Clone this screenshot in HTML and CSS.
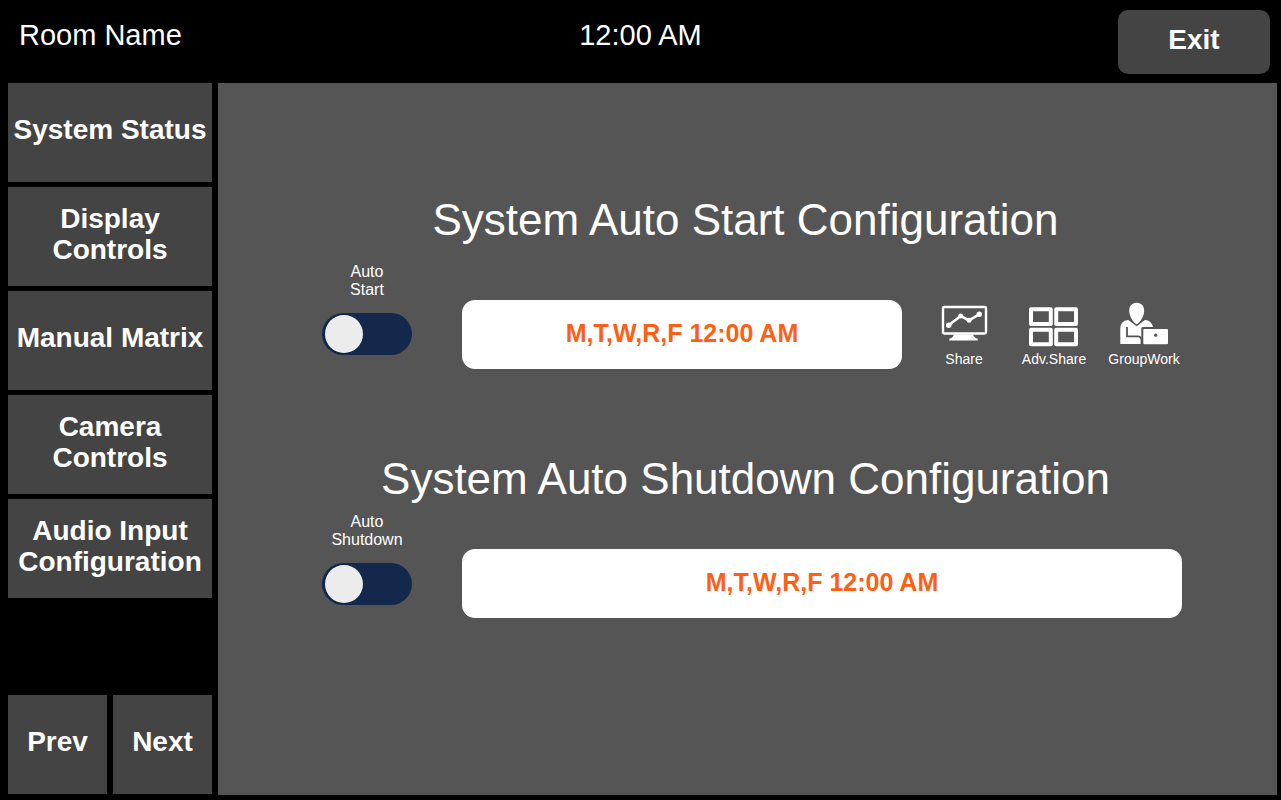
FILE: index.html
```html
<!DOCTYPE html>
<html lang="en">
<head>
<meta charset="utf-8">
<meta name="viewport" content="width=device-width, initial-scale=1">
<title>System Auto Start Configuration</title>
<link rel="stylesheet" href="styles.css">
</head>
<body>
<header class="topbar">
  <div class="room">Room Name</div>
  <time class="clock">12:00 AM</time>
  <button class="btn exit" type="button">Exit</button>
</header>
<div class="layout">
  <nav class="sidebar">
    <button class="btn tile" type="button">System Status</button>
    <button class="btn tile" type="button">Display Controls</button>
    <button class="btn tile" type="button">Manual Matrix</button>
    <button class="btn tile" type="button">Camera Controls</button>
    <button class="btn tile" type="button">Audio Input Configuration</button>
    <div class="pager">
      <button class="btn tile" type="button">Prev</button>
      <button class="btn tile" type="button">Next</button>
    </div>
  </nav>
  <main class="panel">
    <section class="start">
      <h1 class="title">System Auto Start Configuration</h1>
      <div class="row row-start">
        <label class="switch"><span class="switch-text">Auto Start</span><input class="toggle" type="checkbox" role="switch"></label>
        <button class="schedule" type="button">M,T,W,R,F 12:00 AM</button>
        <div class="modes">
          <button class="mode" type="button">
            <svg class="icon" viewBox="0 0 50 50" aria-hidden="true">
              <rect x="4" y="7" width="43" height="26.500" rx="1.200" fill="none" stroke="#fff" stroke-width="2.400"/>
              <path d="M15 34.500h19q1 3.300 4.700 4.300v1.700H10.300v-1.700q3.700-1 4.700-4.300z" fill="#fff"/>
              <path d="M9.700 25.300 21.700 16l8.300 4.300 10.300-6" fill="none" stroke="#fff" stroke-width="2.600"/>
              <g fill="#fff"><circle cx="9.700" cy="25.300" r="2.700"/><circle cx="21.700" cy="16" r="2.500"/><circle cx="30" cy="20.300" r="2.500"/><circle cx="40.300" cy="14.300" r="2.700"/></g>
            </svg>
            <span>Share</span>
          </button>
          <button class="mode" type="button">
            <svg class="icon" viewBox="0 0 50 50" aria-hidden="true">
              <g fill="none" stroke="#fff" stroke-width="4" stroke-linejoin="round">
                <rect x="2" y="9.300" width="19.800" height="14.600"/><rect x="27.200" y="9.300" width="19.800" height="14.600"/>
                <rect x="2" y="29.700" width="19.800" height="14.600"/><rect x="27.200" y="29.700" width="19.800" height="14.600"/>
              </g>
            </svg>
            <span>Adv.Share</span>
          </button>
          <button class="mode" type="button">
            <svg class="icon" viewBox="0 0 50 50" aria-hidden="true">
              <path d="M17.700 2.700c5 0 8 3.600 7.400 9.300-.5 5-4 10.500-7.400 12.300-3.400-1.800-6.900-7.300-7.400-12.300-.6-5.700 2.400-9.300 7.400-9.300z" fill="#fff"/>
              <path d="M9.300 20 17.700 26.300l8.300-6.300q6.500.5 8 6.800V44H1.300V28.500q0-8 8-8.500z" fill="#fff"/>
              <path d="M8 27v9.300h11q3.500.4 3.500 4V45" fill="none" stroke="#555" stroke-width="1.800"/>
              <rect x="22.300" y="27" width="28" height="18.500" rx="1.500" fill="#555"/>
              <rect x="24.300" y="29" width="24.700" height="15.300" rx="1" fill="#fff"/>
              <circle cx="36.700" cy="35.200" r="1.600" fill="#555"/>
            </svg>
            <span>GroupWork</span>
          </button>
        </div>
      </div>
    </section>
    <section class="shutdown">
      <h2 class="title">System Auto Shutdown Configuration</h2>
      <div class="row row-shutdown">
        <label class="switch"><span class="switch-text">Auto Shutdown</span><input class="toggle" type="checkbox" role="switch"></label>
        <button class="schedule" type="button">M,T,W,R,F 12:00 AM</button>
      </div>
    </section>
  </main>
</div>
</body>
</html>
```
FILE: styles.css
```css
* { box-sizing: border-box; }

body {
  margin: 0;
  min-height: 100vh;
  display: flex;
  flex-direction: column;
  background: #000;
  color: #fff;
  font-family: "Liberation Sans", Arial, sans-serif;
}

button {
  margin: 0;
  border: 0;
  font-family: inherit;
  color: inherit;
  cursor: pointer;
}

.topbar {
  display: grid;
  grid-template-columns: 1fr auto 1fr;
  align-items: start;
  padding: 10px 11px 9px;
  font-size: 29px;
  line-height: 32px;
}

.room,
.clock { padding-top: 9px; }

.room { padding-left: 8px; }

.btn {
  padding: 0 0 6px;
  background: #444;
  font-size: 28px;
  font-weight: bold;
  line-height: 31px;
}

.exit {
  justify-self: end;
  width: 152px;
  height: 64px;
  border-radius: 10px;
}

.layout {
  flex: 1;
  display: grid;
  grid-template-columns: 204px 1fr;
  gap: 6px;
  padding: 0 4px 5px 8px;
}

.sidebar {
  display: flex;
  flex-direction: column;
  gap: 5px;
  padding-bottom: 1px;
}

.tile { min-height: 99px; }

.pager {
  margin-top: auto;
  display: grid;
  grid-template-columns: 1fr 1fr;
  gap: 6px;
}

.panel {
  padding-top: 112px;
  background: #555;
}

.title {
  margin: 0;
  padding-right: 4px;
  font-size: 44px;
  font-weight: normal;
  line-height: 50px;
  text-align: center;
}

.shutdown { margin-top: 85px; }

.row {
  display: flex;
  align-items: flex-start;
}

.row-start { padding: 18px 88px 0 104px; }
.row-shutdown { padding: 9px 95px 0 104px; }

.switch {
  width: 90px;
  margin-right: 50px;
  display: flex;
  flex-direction: column;
  align-items: center;
  gap: 14px;
  font-size: 16px;
  line-height: 18px;
  text-align: center;
}

.switch-text { width: min-content; }

.toggle {
  appearance: none;
  width: 90px;
  height: 42px;
  margin: 0;
  padding: 2px 3px;
  border-radius: 21px;
  background: #14284b;
  cursor: pointer;
}

.toggle::before {
  content: "";
  display: block;
  width: 38px;
  height: 38px;
  border-radius: 50%;
  background: #ececec;
}

.toggle:checked::before { margin-left: auto; }

.schedule {
  flex: 1;
  min-height: 69px;
  margin-top: 36px;
  padding: 0 0 3px;
  border-radius: 13px;
  background: #fff;
  color: #ff5f14;
  font-size: 25px;
  font-weight: bold;
  line-height: 28px;
}

.row-start .schedule { margin-top: 37px; }

.modes {
  display: grid;
  grid-template-columns: repeat(3, 90px);
  margin: 37px 0 0 17px;
}

.mode {
  display: flex;
  flex-direction: column;
  align-items: center;
  padding: 0;
  background: none;
  font-size: 14px;
  line-height: 18px;
}

.icon {
  width: 50px;
  height: 50px;
}
```
